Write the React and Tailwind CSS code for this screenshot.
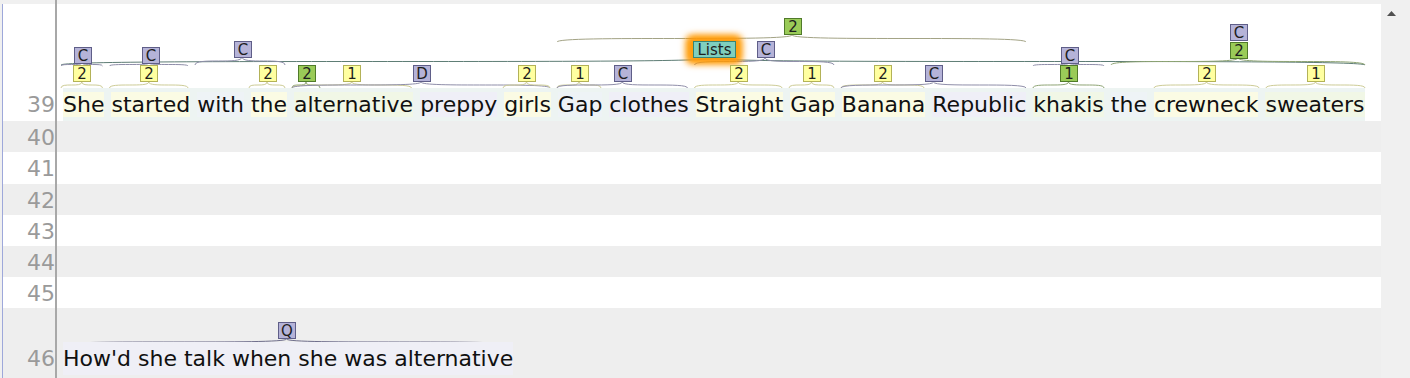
import { Fragment } from "react"

// colours per annotation type
const Y = { fill: "#ffffa0", stroke: "#b3b258", line: "#cdcc96" }
const P = { fill: "#b5b3d8", stroke: "#5f5e88", line: "#8f8ea9" }
const G = { fill: "#9acb58", stroke: "#507a2a", line: "#8ea474" }
const T = { fill: "#7fcfbe", stroke: "#378574", line: "#5e7d75" }

// brat style curly bracket
function curly(x1, x2, cx, top, bottom) {
  return `M${x1},${bottom} C${x1},${top} ${cx},${bottom} ${cx},${top} C${cx},${bottom} ${x2},${top} ${x2},${bottom}`
}

function Label({ cx, y, text, c, w = 17 }) {
  const x = Math.round(cx - w / 2) + 0.5
  return (
    <g>
      <rect x={x} y={y + 0.5} width={w} height={16} fill={c.fill} stroke={c.stroke} strokeWidth="1" />
      <text x={x + w / 2} y={y + 13.5} textAnchor="middle" fontSize="15" fill="#1e1e1e">
        {text}
      </text>
    </g>
  )
}

// level 1 spans, right above the words
const level1 = [
  [63, 104.5, "2", Y],
  [111.5, 190, "2", Y],
  [251, 287, "2", Y],
  [294, 322, "2", G],
  [294, 413.5, "1", Y],
  [294, 552, "D", P],
  [505, 552, "2", Y],
  [559, 603, "1", Y],
  [559, 689.5, "C", P],
  [696.5, 784, "2", Y],
  [791, 836, "1", Y],
  [843, 926, "2", Y],
  [843, 1028, "C", P],
  [1035, 1106, "1", G],
  [1156, 1261, "2", Y],
  [1268, 1367, "1", Y],
]

const words = [
  ["She", "y"],
  ["started", "y"],
  ["with", "b"],
  ["the", "y"],
  ["alternative", "g"],
  ["preppy", "l"],
  ["girls", "y"],
  ["Gap", "b"],
  ["clothes", "l"],
  ["Straight", "y"],
  ["Gap", "y"],
  ["Banana", "y"],
  ["Republic", "l"],
  ["khakis", "g"],
  ["the", "b"],
  ["crewneck", "y"],
  ["sweaters", "g"],
]

const wordBg = {
  y: "bg-[#fbfbe4]",
  b: "bg-[#eef3f6]",
  l: "bg-[#efeff7]",
  g: "bg-[#f1f7e6]",
}

const emptyRows = [
  { n: 40, h: "h-[31px]", bg: "bg-[#eeeeee]" },
  { n: 41, h: "h-[32px]", bg: "bg-white" },
  { n: 42, h: "h-[31px]", bg: "bg-[#eeeeee]" },
  { n: 43, h: "h-[31px]", bg: "bg-white" },
  { n: 44, h: "h-[31px]", bg: "bg-[#eeeeee]" },
  { n: 45, h: "h-[31px]", bg: "bg-white" },
]

function Annotations39() {
  return (
    <svg width="1322" height="84" viewBox="59 4 1322 84" fontFamily="DejaVu Sans, sans-serif" className="block">
      <defs>
        <filter id="glow" x="-50%" y="-80%" width="200%" height="260%">
          <feGaussianBlur stdDeviation="3.5" />
        </filter>
      </defs>

      {/* level 3 */}
      <path d={curly(559, 1028, 794, 35, 42)} fill="none" stroke="#a3a385" strokeWidth="1" />
      <Label cx={794} y={18} text="2" c={G} />

      {/* level 2 brackets */}
      <path d={curly(63, 1367, 716, 58, 65)} fill="none" stroke={T.line} strokeWidth="1" />
      <path d={curly(197, 287, 244, 57, 65)} fill="none" stroke={P.line} strokeWidth="1" />
      <path d={curly(696.5, 836, 767, 58, 65)} fill="none" stroke={P.line} strokeWidth="1" />
      <path d={curly(1113, 1367, 1240, 58, 65)} fill="none" stroke={G.line} strokeWidth="1" />
      <path d={curly(63, 104.5, 84, 63, 66)} fill="none" stroke={P.line} strokeWidth="1" />
      <path d={curly(111.5, 190, 151, 63, 66)} fill="none" stroke={P.line} strokeWidth="1" />
      <path d={curly(1035, 1106, 1071, 63, 66)} fill="none" stroke={P.line} strokeWidth="1" />

      {/* level 2 labels */}
      <Label cx={84} y={47} text="C" c={P} />
      <Label cx={152} y={47} text="C" c={P} />
      <Label cx={244.5} y={41} text="C" c={P} />
      <rect x="688" y="35" width="56" height="29" rx="6" fill="#ff9500" filter="url(#glow)" />
      <rect x="691" y="38" width="50" height="23" rx="4" fill="#ffa010" opacity="0.8" filter="url(#glow)" />
      <Label cx={716} y={41} text="Lists" c={T} w={42} />
      <Label cx={767} y={41} text="C" c={P} />
      <Label cx={1071} y={47} text="C" c={P} />
      <Label cx={1240} y={24} text="C" c={P} />
      <Label cx={1240} y={42} text="2" c={G} />

      {/* level 1 */}
      {level1.map(([x1, x2, t, c], i) => (
        <path key={"b" + i} d={curly(x1, x2, (x1 + x2) / 2, 82, 88)} fill="none" stroke={c.line} strokeWidth="1" />
      ))}
      {level1.map(([x1, x2, t, c], i) => (
        <Label key={"l" + i} cx={(x1 + x2) / 2} y={65} text={t} c={c} />
      ))}
    </svg>
  )
}

function Annotations46() {
  return (
    <svg width="1322" height="34" viewBox="59 308 1322 34" fontFamily="DejaVu Sans, sans-serif" className="block">
      <path d={curly(63, 514, 288.5, 339, 345)} fill="none" stroke="#6f6e8c" strokeWidth="1" />
      <Label cx={288.5} y={322} text="Q" c={P} />
    </svg>
  )
}

export default function App() {
  return (
    <div className="w-[1410px] h-[378px] overflow-hidden bg-[#f0f0f0] flex font-['DejaVu_Sans',sans-serif]">
      <div className="w-[1381px] flex flex-col">
        {/* top strip */}
        <div className="h-[4px] flex shrink-0">
          <div className="w-[57px] border-r-2 border-[#a8a8a8]" />
        </div>

        <div className="ml-[2px] border-l border-[#9ea8da] flex flex-col">
          {/* row 39 */}
          <div className="flex bg-white h-[117px]">
            <div className="w-[54px] border-r-2 border-[#a8a8a8] flex flex-col justify-end text-right text-[22px] leading-[33px] text-[#9a9a9a]">
              39
            </div>
            <div className="flex-1 flex flex-col">
              <Annotations39 />
              <div className="ml-[6px] w-fit bg-[#edf4f2] text-[22px] leading-[33px] text-[#111] whitespace-pre">
                {words.map(([w, c], i) => (
                  <Fragment key={i}>
                    {i > 0 && " "}
                    <span className={wordBg[c]}>{w}</span>
                  </Fragment>
                ))}
              </div>
            </div>
          </div>

          {emptyRows.map((r) => (
            <div key={r.n} className={`flex ${r.h} ${r.bg}`}>
              <div className="w-[54px] border-r-2 border-[#a8a8a8] text-right text-[22px] leading-[33px] text-[#9a9a9a]">
                {r.n}
              </div>
              <div className="flex-1" />
            </div>
          ))}

          {/* row 46 */}
          <div className="flex bg-[#eeeeee] h-[80px]">
            <div className="w-[54px] border-r-2 border-[#a8a8a8] flex flex-col text-right text-[22px] leading-[33px] text-[#9a9a9a]">
              <div className="h-[34px]" />
              <div>46</div>
            </div>
            <div className="flex-1 flex flex-col">
              <Annotations46 />
              <div className="ml-[6px] w-fit bg-[#efeff6] text-[22px] leading-[33px] text-[#111] whitespace-pre">
                How'd she talk when she was alternative
              </div>
            </div>
          </div>
        </div>
      </div>

      {/* scrollbar */}
      <div className="flex-1 pt-[11px] pl-[6px]">
        <svg width="9" height="5" className="block">
          <path d="M4.5 0 L9 5 L0 5 Z" fill="#505050" />
        </svg>
      </div>
    </div>
  )
}
